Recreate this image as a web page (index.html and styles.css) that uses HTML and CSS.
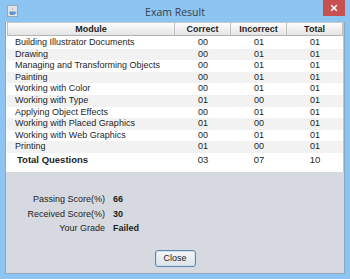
FILE: index.html
```html
<!DOCTYPE html>
<html>
<head>
<meta charset="utf-8">
<link rel="stylesheet" href="styles.css">
</head>
<body>
<div class="window">
  <div class="titlebar">
    <span class="app-icon">
      <svg width="11" height="12" viewBox="0 0 11 12">
        <rect x="0.5" y="0.5" width="10" height="11" fill="#dfe4ea" stroke="#9aa6b4"/>
        <path d="M5 2 C6.5 3.2 4 4.2 5.6 5.6 C4.6 4.4 7.4 3.8 5 2 Z" fill="#e07a2a"/>
        <path d="M2.5 6.5 H8 V8.6 C8 9.6 7 10 5.2 10 C3.4 10 2.5 9.6 2.5 8.6 Z" fill="#5b8fc9"/>
        <path d="M8 7 C9.6 7 9.6 8.6 8 8.6" fill="none" stroke="#5b8fc9" stroke-width="0.8"/>
      </svg>
    </span>
    <span class="title">Exam Result</span>
    <span class="close-btn">
      <svg width="8" height="8" viewBox="0 0 8 8"><path d="M1.2 1.2 L6.8 6.8 M6.8 1.2 L1.2 6.8" stroke="#fff" stroke-width="1.6"/></svg>
    </span>
  </div>
  <div class="client">
    <div class="scroll">
      <div class="grid">
        <div class="th">Module</div><div class="th">Correct</div><div class="th">Incorrect</div><div class="th">Total</div>
        <div class="td name">Building Illustrator Documents</div><div class="td">00</div><div class="td">01</div><div class="td">01</div>
        <div class="td name alt">Drawing</div><div class="td alt">00</div><div class="td alt">01</div><div class="td alt">01</div>
        <div class="td name">Managing and Transforming Objects</div><div class="td">00</div><div class="td">01</div><div class="td">01</div>
        <div class="td name alt">Painting</div><div class="td alt">00</div><div class="td alt">01</div><div class="td alt">01</div>
        <div class="td name">Working with Color</div><div class="td">00</div><div class="td">01</div><div class="td">01</div>
        <div class="td name alt">Working with Type</div><div class="td alt">01</div><div class="td alt">00</div><div class="td alt">01</div>
        <div class="td name">Applying Object Effects</div><div class="td">00</div><div class="td">01</div><div class="td">01</div>
        <div class="td name alt">Working with Placed Graphics</div><div class="td alt">01</div><div class="td alt">00</div><div class="td alt">01</div>
        <div class="td name">Working with Web Graphics</div><div class="td">00</div><div class="td">01</div><div class="td">01</div>
        <div class="td name alt">Printing</div><div class="td alt">01</div><div class="td alt">00</div><div class="td alt">01</div>
        <div class="tt name">Total Questions</div><div class="tt">03</div><div class="tt">07</div><div class="tt">10</div>
      </div>
    </div>
    <div class="info">
      <span class="label">Passing Score(%)</span><span class="value">66</span>
      <span class="label">Received Score(%)</span><span class="value">30</span>
      <span class="label">Your Grade</span><span class="value">Failed</span>
    </div>
    <button class="btn">Close</button>
  </div>
</div>
</body>
</html>
```

FILE: styles.css
```css
html, body {
  margin: 0;
  padding: 0;
}
body {
  width: 350px;
  height: 279px;
  overflow: hidden;
  background: #8cc4f2;
  font-family: "Liberation Sans", Arial, sans-serif;
  font-size: 9px;
  color: #1e1e1e;
}
.window {
  width: 350px;
  height: 279px;
  display: flex;
  flex-direction: column;
}
.titlebar {
  height: 22px;
  display: grid;
  grid-template-columns: 1fr auto 1fr;
  align-items: start;
}
.app-icon {
  justify-self: start;
  margin: 5px 0 0 7px;
  display: block;
  height: 12px;
}
.app-icon svg { display: block; }
.title {
  font-family: "Open Sans", "Noto Sans", sans-serif;
  font-size: 10.5px;
  color: #3a3f46;
  line-height: 22px;
  margin-top: 1px;
}
.close-btn {
  justify-self: end;
  margin-right: 5px;
  width: 22px;
  height: 16px;
  background: #c75050;
  display: flex;
  align-items: center;
  justify-content: center;
}
.close-btn svg { display: block; }
.client {
  margin: 0 5px;
  height: 251px;
  border: 1px solid #8da6bf;
  border-top: none;
  background: #d6d9df;
  display: flex;
  flex-direction: column;
}
.scroll {
  background: #fff;
  height: 150px;
  padding: 0 1px;
  border-right: 1px solid #c2c6cc;
}
.grid {
  display: grid;
  grid-template-columns: 168px 56px 56px 56px;
  grid-auto-rows: 11.6px;
  grid-template-rows: 15px;
}
.th {
  font-weight: bold;
  text-align: center;
  line-height: 13px;
  background: linear-gradient(#fdfdfd, #e4e4e4);
  border-top: 1px solid #c8c8c8;
  border-bottom: 1px solid #b4b4b4;
  border-right: 1px solid #c0c0c0;
  box-sizing: border-box;
  height: 14px;
  margin-bottom: 1px;
}
.th:first-child { border-left: 1px solid #c0c0c0; }
.td {
  line-height: 11.6px;
  text-align: center;
  white-space: nowrap;
}
.td.name {
  text-align: left;
  padding-left: 8px;
}
.alt { background: #f2f2f2; }
.tt {
  line-height: 14px;
  height: 14px;
  text-align: center;
  font-size: 9.5px;
}
.tt.name {
  text-align: left;
  padding-left: 10px;
  font-weight: bold;
  font-size: 9.5px;
}
.info {
  display: grid;
  grid-template-columns: 99px auto;
  column-gap: 8px;
  grid-auto-rows: 14.5px;
  align-items: center;
  margin-top: 20px;
}
.label { text-align: right; }
.value { font-weight: bold; }
.btn {
  align-self: center;
  margin-top: 14px;
  width: 41px;
  height: 17px;
  padding: 0;
  font-family: "Liberation Sans", Arial, sans-serif;
  font-size: 9px;
  color: #1e1e1e;
  border: 1px solid #5f86ae;
  border-radius: 3px;
  background: linear-gradient(#f6f7f9, #dde1e6);
  box-shadow: inset 0 0 0 1px #cfe0f1;
}
```
